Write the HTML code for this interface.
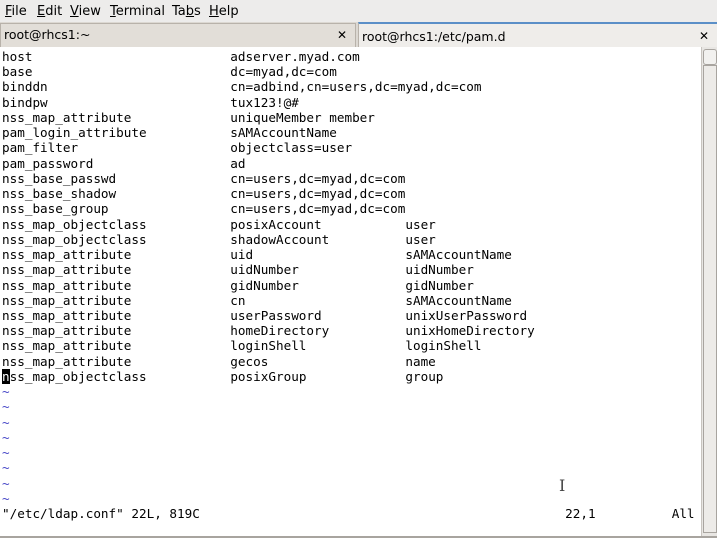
<!DOCTYPE html>
<html><head><style>
body{margin:0;width:717px;height:538px;overflow:hidden;background:#edeceb;font-family:"DejaVu Sans","Liberation Sans",sans-serif;position:relative}
.menu{position:absolute;top:0;left:0;width:717px;height:22px;background:#edeceb;font-size:13px;color:#000}
.menu span{position:absolute;top:4px}
.tabs{position:absolute;top:22px;left:0;width:717px;height:25px;background:#dcd8d2;}
.tab{position:absolute;top:0;height:25px;font-size:12.5px;line-height:25px;box-sizing:border-box;padding-left:3px}
.t1{left:0;width:356px;background:#e2ded8;border:1px solid #b8b2aa;border-bottom:none;top:1px;height:24px;line-height:22px}
.t2{left:358px;width:359px;background:#efedea;border-top:2px solid #5b8fc7;border-left:1px solid #b8b2aa;}
.x{position:absolute;right:8px;font-weight:bold;font-size:12px}
.term{position:absolute;top:47px;left:0;width:701px;height:489px;background:#fff}
pre{margin:0;position:absolute;left:2px;top:2px;font-family:"DejaVu Sans Mono","Liberation Mono",monospace;font-size:12.65px;line-height:15.24px;color:#000}
.t{color:#4848c8}
.cur{background:#000;color:#fff}
.sb{position:absolute;left:701px;top:47px;width:16px;height:489px;background:#e8e6e3;border-left:1px solid #c8c4bf}
.btn{position:absolute;left:1px;top:2px;width:12px;height:14px;border:1px solid #a8a49f;border-radius:3px;background:#f2f1ef}
.thumb{position:absolute;left:1px;top:18px;width:12px;height:466px;border:1px solid #a8a49f;background:#edebe8}
.bot{position:absolute;top:536px;left:0;width:717px;height:2px;background:#a8a49f}
</style></head><body>
<div class="menu"><span style="left:5px"><u>F</u>ile</span><span style="left:37px"><u>E</u>dit</span><span style="left:70px"><u>V</u>iew</span><span style="left:110px"><u>T</u>erminal</span><span style="left:172px">Ta<u>b</u>s</span><span style="left:209px"><u>H</u>elp</span></div>
<div class="tabs">
<div class="tab t1">root@rhcs1:~<span class="x">✕</span></div>
<div class="tab t2">root@rhcs1:/etc/pam.d<span class="x">✕</span></div>
</div>
<div class="term"><pre>host                          adserver.myad.com
base                          dc=myad,dc=com
binddn                        cn=adbind,cn=users,dc=myad,dc=com
bindpw                        tux123!@#
nss_map_attribute             uniqueMember member
pam_login_attribute           sAMAccountName
pam_filter                    objectclass=user
pam_password                  ad
nss_base_passwd               cn=users,dc=myad,dc=com
nss_base_shadow               cn=users,dc=myad,dc=com
nss_base_group                cn=users,dc=myad,dc=com
nss_map_objectclass           posixAccount           user
nss_map_objectclass           shadowAccount          user
nss_map_attribute             uid                    sAMAccountName
nss_map_attribute             uidNumber              uidNumber
nss_map_attribute             gidNumber              gidNumber
nss_map_attribute             cn                     sAMAccountName
nss_map_attribute             userPassword           unixUserPassword
nss_map_attribute             homeDirectory          unixHomeDirectory
nss_map_attribute             loginShell             loginShell
nss_map_attribute             gecos                  name
<span class="cur">n</span>ss_map_objectclass           posixGroup             group
<span class="t">~
~
~
~
~
~
~
~</span>
"/etc/ldap.conf" 22L, 819C                                                22,1          All</pre>
<div style="position:absolute;left:559px;top:429px;font-size:16px;color:#444;font-family:'DejaVu Serif',serif">I</div>
</div>
<div class="sb"><div class="btn"></div><div class="thumb"></div></div>
<div class="bot"></div>
</body></html>
